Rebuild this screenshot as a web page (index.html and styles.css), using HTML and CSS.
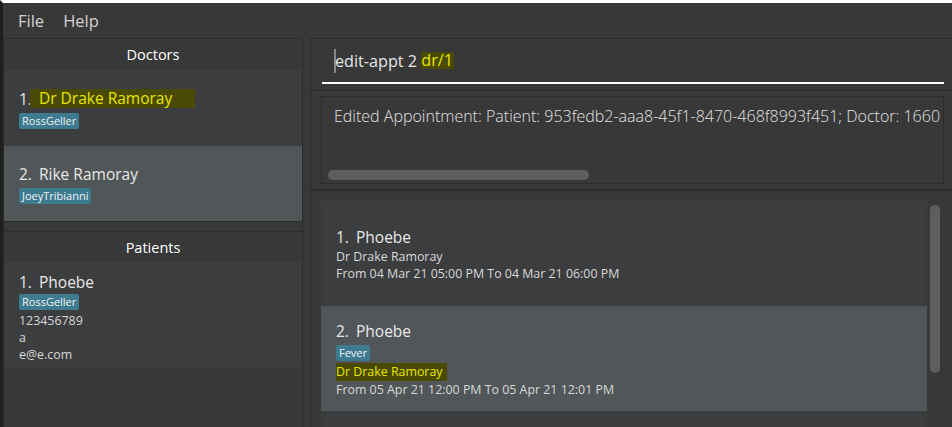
FILE: index.html
```html
<!DOCTYPE html>
<html>
<head>
<meta charset="utf-8">
<link rel="stylesheet" href="styles.css">
</head>
<body>
<div class="app">
  <div class="menubar">
    <span class="menu-item">File</span>
    <span class="menu-item">Help</span>
  </div>
  <div class="main">
    <div class="left">
      <section class="panel doctors">
        <div class="panel-header">Doctors</div>
        <div class="list">
          <div class="card doc-card">
            <div class="title"><span class="idx">1.</span><span class="hl name-hl">Dr Drake Ramoray</span></div>
            <div class="tags"><span class="tag">RossGeller</span></div>
          </div>
          <div class="card doc-card selected">
            <div class="title"><span class="idx">2.</span><span class="name">Rike Ramoray</span></div>
            <div class="tags"><span class="tag">JoeyTribianni</span></div>
          </div>
        </div>
      </section>
      <section class="panel patients">
        <div class="panel-header">Patients</div>
        <div class="list">
          <div class="card pat-card">
            <div class="title"><span class="idx">1.</span><span class="name">Phoebe</span></div>
            <div class="tags"><span class="tag">RossGeller</span></div>
            <div class="detail">123456789</div>
            <div class="detail">a</div>
            <div class="detail">e@e.com</div>
          </div>
        </div>
      </section>
    </div>
    <div class="right">
      <div class="command">
        <div class="command-field">
          <span class="caret"></span><span class="cmd-text">edit-appt 2 </span><span class="hl cmd-hl">dr/1</span>
        </div>
      </div>
      <div class="result">
        <div class="result-box">
          <div class="result-text">Edited Appointment: Patient: 953fedb2-aaa8-45f1-8470-468f8993f451; Doctor: 1660</div>
          <div class="hscroll"><div class="hthumb"></div></div>
        </div>
      </div>
      <div class="appts">
        <div class="appt-list">
          <div class="appt-items">
            <div class="card appt-card">
              <div class="title"><span class="idx">1.</span><span class="name">Phoebe</span></div>
              <div class="detail">Dr Drake Ramoray</div>
              <div class="detail">From 04 Mar 21 05:00 PM To 04 Mar 21 06:00 PM</div>
            </div>
            <div class="card appt-card selected">
              <div class="title"><span class="idx">2.</span><span class="name">Phoebe</span></div>
              <div class="tags"><span class="tag">Fever</span></div>
              <div class="detail"><span class="hl dr-hl">Dr Drake Ramoray</span></div>
              <div class="detail">From 05 Apr 21 12:00 PM To 05 Apr 21 12:01 PM</div>
            </div>
            <div class="appt-rest"></div>
          </div>
          <div class="vscroll"><div class="vthumb"></div></div>
        </div>
      </div>
    </div>
  </div>
</div>
</body>
</html>
```

FILE: styles.css
```css
* { box-sizing: border-box; }
html, body {
  margin: 0;
  padding: 0;
  width: 952px;
  height: 427px;
  overflow: hidden;
  background: #383838;
  font-family: "Open Sans", "Noto Sans", sans-serif;
  color: #e4e4e4;
}
.app {
  width: 952px;
  height: 427px;
  border-top: 3px solid #ffffff;
  border-left: 3px solid #1f1f1f;
  background: #383838;
  display: flex;
  flex-direction: column;
  overflow: hidden;
}
.menubar {
  height: 35px;
  display: flex;
  align-items: center;
  padding-left: 15px;
  gap: 19px;
  background: #383838;
}
.menu-item {
  font-size: 16.5px;
  color: #d2d2d2;
}
.main {
  flex: 1;
  display: flex;
  min-height: 0;
  min-width: 0;
}
.left {
  width: 300px;
  flex-shrink: 0;
  display: flex;
  flex-direction: column;
  border-right: 1px solid #2b2b2b;
  border-left: 1px solid #2b2b2b;
}
.panel {
  border-top: 1px solid #2b2b2b;
  display: flex;
  flex-direction: column;
}
.doctors {
  height: 184px;
  border-bottom: 1px solid #2b2b2b;
}
.patients {
  margin-top: 9px;
  flex: 1;
}
.panel-header {
  height: 31px;
  display: flex;
  align-items: center;
  justify-content: center;
  font-size: 14.5px;
  color: #ffffff;
  background: #383838;
}
.patients .panel-header { height: 30px; }
.list {
  flex: 1;
  background: #383838;
}
.card {
  background: #3c3d3f;
  display: flex;
  flex-direction: column;
  padding-left: 15px;
}
.card.selected { background: #515658; }
.doc-card {
  height: 76px;
  justify-content: center;
}
.doc-card.selected { height: 75px; }
.doc-card .tags { margin-bottom: 0; }
.pat-card {
  height: 105px;
  padding-top: 9px;
}
.pat-card .tags { margin-top: 1px; }
.title {
  font-size: 15.5px;
  line-height: 22px;
  height: 22px;
  color: #e8e8e8;
  white-space: nowrap;
  display: flex;
  align-items: center;
}
.idx { width: 20px; }
.hl {
  background: #4a4a05;
  color: #e6e600;
}
.name-hl {
  margin-left: -9px;
  padding: 0 23px 0 9px;
  line-height: 19px;
}
.tags {
  display: flex;
  margin-top: 3px;
  margin-bottom: 2px;
}
.tag {
  background: #3e7a90;
  color: #f2f2f2;
  font-size: 11px;
  line-height: 16px;
  height: 16px;
  padding: 0 3px;
  border-radius: 2px;
}
.detail {
  font-size: 12.4px;
  line-height: 17px;
  color: #d8d8d8;
  white-space: nowrap;
}
.right {
  flex: 1;
  min-width: 0;
  margin-left: 7px;
  border-left: 1px solid #2b2b2b;
  display: flex;
  flex-direction: column;
}
.command {
  height: 53px;
  border-top: 1px solid #2b2b2b;
  border-bottom: 1px solid #2b2b2b;
  padding: 0 8px 0 11px;
}
.command-field {
  height: 45px;
  border-bottom: 2px solid #ffffff;
  display: flex;
  align-items: center;
  padding-left: 12px;
  font-size: 16.2px;
  color: #e6e6e6;
  white-space: pre;
}
.caret {
  width: 2px;
  height: 24px;
  background: #8a8a8a;
  margin-right: -1px;
}
.cmd-hl {
  line-height: 17px;
  padding: 0 1px 0 0;
}
.result {
  height: 100px;
  border-bottom: 2px solid #2b2b2b;
  padding: 5px 8px 5px 10px;
}
.result-box {
  height: 88px;
  border: 1px solid #2b2b2b;
  display: flex;
  flex-direction: column;
  overflow: hidden;
}
.result-text {
  font-size: 16px;
  color: #e2e2e2;
  white-space: nowrap;
  padding: 8px 0 0 12px;
  flex: 1;
  font-weight: 300;
  overflow: hidden;
}
.hscroll {
  height: 15px;
  padding: 2px 6px 4px 6px;
}
.hthumb {
  width: 261px;
  height: 10px;
  background: #5e5e5e;
  border-radius: 5px;
}
.appts {
  flex: 1;
  padding: 10px 0 0 10px;
  min-height: 0;
}
.appt-list {
  display: flex;
  height: 100%;
}
.appt-items {
  width: 606px;
  display: flex;
  flex-direction: column;
}
.appt-card {
  height: 105px;
  justify-content: center;
  flex-shrink: 0;
}
.appt-rest {
  flex: 1;
  background: #3c3d3f;
}
.dr-hl {
  display: inline-block;
  padding: 0 4px 0 0;
  line-height: 18px;
}
.vscroll {
  width: 15px;
  padding: 4px 2px 0 3px;
}
.vthumb {
  width: 10px;
  height: 168px;
  background: #5e5e5e;
  border-radius: 5px;
}
```
